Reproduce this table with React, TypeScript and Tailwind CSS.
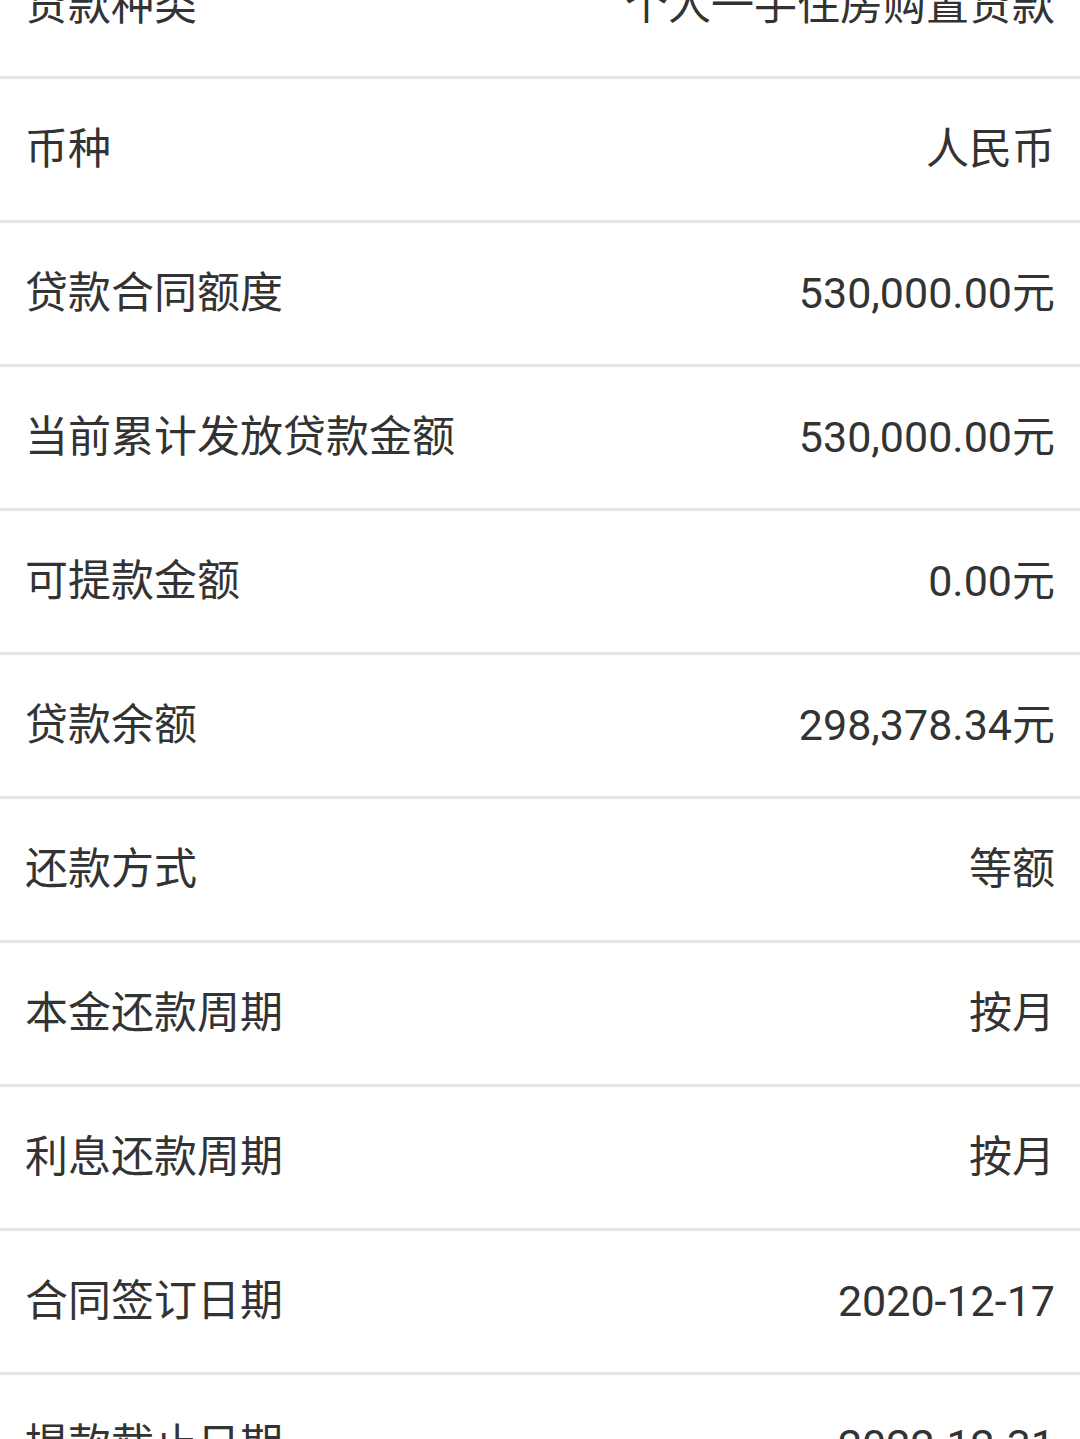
const rows = [
  { label: "贷款种类", value: "个人一手住房购置贷款" },
  { label: "币种", value: "人民币" },
  { label: "贷款合同额度", value: "530,000.00元" },
  { label: "当前累计发放贷款金额", value: "530,000.00元" },
  { label: "可提款金额", value: "0.00元" },
  { label: "贷款余额", value: "298,378.34元" },
  { label: "还款方式", value: "等额" },
  { label: "本金还款周期", value: "按月" },
  { label: "利息还款周期", value: "按月" },
  { label: "合同签订日期", value: "2020-12-17" },
  { label: "提款截止日期", value: "2022-12-31" },
];

export default function App() {
  return (
    <div className="h-[1439px] overflow-hidden bg-white">
      {/* loan detail list, scrolled so the first row is cut off */}
      <div className="mt-[-65px] font-['Roboto','Noto_Sans_CJK_SC',sans-serif] text-[43px] text-[#333333]">
        {rows.map((row) => (
          <div
            key={row.label}
            className="flex h-[144px] items-center justify-between border-b-[3px] border-[#e5e5e5] px-[25px]"
          >
            <span>{row.label}</span>
            <span>{row.value}</span>
          </div>
        ))}
      </div>
    </div>
  );
}
